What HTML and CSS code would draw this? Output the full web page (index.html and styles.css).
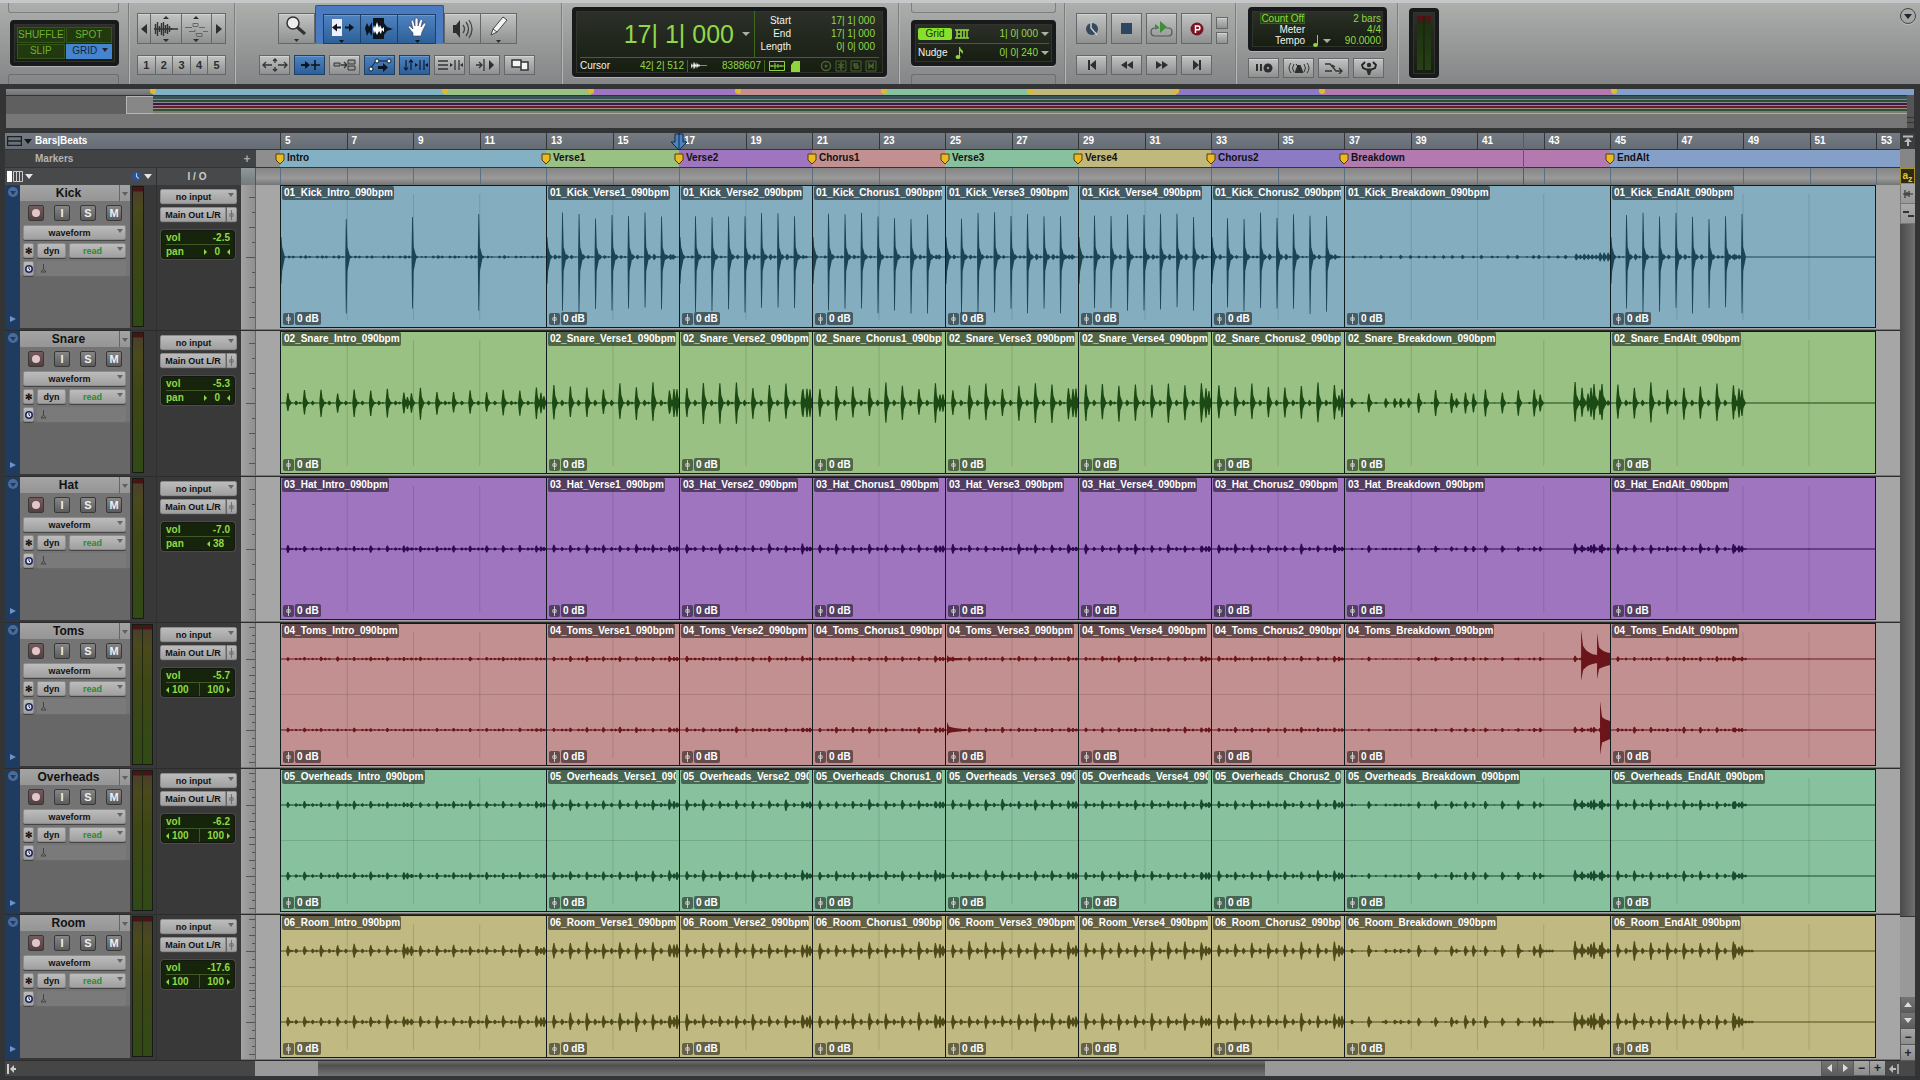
FILE: index.html
```html
<!DOCTYPE html>
<html lang="en">
<head>
<meta charset="utf-8">
<title>Edit window</title>
<link rel="stylesheet" href="styles.css">
</head>
<body>
<svg class="defs" aria-hidden="true">
  <symbol id="i-fader" viewBox="0 0 8 12"><path d="M4 0v12M2 4.500h4v3H2z" fill="none" stroke="currentColor"/></symbol>
  <symbol id="i-wave" viewBox="0 0 22 14"><path d="M0 7l1-4 1 4 1-6 1 5 1-5 1 5 1-4 1 4 1-3 1 3 1-2 1 2h10v.8H12l-1 2-1-2-1 3-1-3-1 4-1-4-1 5-1-5-1 5-1-6-1 5z" fill="currentColor"/></symbol>
  <symbol id="i-clock" viewBox="0 0 10 10"><circle cx="5" cy="5" r="4" fill="#dfe3f2" stroke="#22265c" stroke-width="2"/><path d="M5 2.500V5l1.500 1.500" fill="none" stroke="#15183c" stroke-width="1.200"/></symbol>
</svg>

<header class="toolbar">
  <section class="panel modes">
    <div class="lcd mode-grid">
      <button class="mode">SHUFFLE</button><button class="mode">SPOT</button>
      <button class="mode">SLIP</button><button class="mode on">GRID<i class="tri"></i></button>
    </div>
  </section>

  <section class="panel zooms">
    <div class="joined tall">
      <button class="tb narrow" aria-label="Zoom out"><svg width="6" height="10"><path d="M6 0v10L0 5z"/></svg></button>
      <button class="tb" aria-label="Audio zoom"><svg width="24" height="26" viewBox="0 0 24 26"><path d="M12 0l3 3H9zM12 26l3-3H9z"/><path d="M1.500 8v10M3.500 6v14M5.500 10v6M7.500 7v12M9.500 6v14M11.500 9v8M13.500 8v10M15.500 10v6M17.500 12v2M0 13h24" stroke="#333" stroke-width="1.400"/></svg></button>
      <button class="tb" aria-label="Midi zoom"><svg width="24" height="26" viewBox="0 0 24 26"><path d="M12 0l3 3H9zM12 26l3-3H9z"/><path d="M1 11.500h7M9 7.500h5v3H9zM15 11.500h6M5 15.500h6v-2M12 17.500h6v3h-5zM19 15.500h5" fill="none" stroke="#666"/></svg></button>
      <button class="tb narrow" aria-label="Zoom in"><svg width="6" height="10"><path d="M0 0v10l6-5z"/></svg></button>
    </div>
    <div class="joined short">
      <button class="tb">1</button><button class="tb">2</button><button class="tb">3</button><button class="tb">4</button><button class="tb">5</button>
    </div>
  </section>

  <section class="panel tools">
    <div class="joined tall tool-row">
      <button class="tb" aria-label="Zoomer"><svg width="24" height="28" viewBox="0 0 24 28"><circle cx="9" cy="8" r="6" fill="#eee" stroke="#333" stroke-width="1.500"/><path d="M13 12l8 7" stroke="#333" stroke-width="3"/><path d="M10 24h5l-2.500 3z"/></svg></button>
      <div class="smart">
        <button class="tb on" aria-label="Trim"><svg width="26" height="28" viewBox="0 0 26 28"><path d="M3 4h10v17H3z" fill="#eef"/><path d="M3 12.500l5-4v3h4v2H8v3zM25 12.500l-5-4v3h-4v2h4v3z"/><path d="M10 25h5l-2.500 3z"/></svg></button>
        <button class="tb on" aria-label="Selector"><svg width="28" height="26" viewBox="0 0 28 26"><path d="M0 12l2-5 2 4 3-5v14l-3-4-2 4zM19 7l3 4 6 2-6 2-3 4z"/><path d="M8 2h11v21H8z"/><path d="M8 13l1-4 1 3 2-6 2 6 1-3 2 4 2-2v5l-2-2-1 4-2-3-2 4-2-4-1 3z" fill="#fff"/></svg></button>
        <button class="tb on" aria-label="Grabber"><svg width="22" height="28" viewBox="0 0 22 28"><path d="M7 21v-3L2 12q1-2 3 0l2 2-2-8q1-2 2.500 0L9 11 9 4q1.500-2 3 0v7l2-6q2-1.500 2.500.500L15 12l3-4q2-.500 2 1l-4 8-1 4z" fill="#fff" stroke="#335" stroke-width=".6"/><path d="M9 25h5l-2.500 3z"/></svg></button>
      </div>
      <button class="tb" aria-label="Scrubber"><svg width="22" height="22" viewBox="0 0 22 22"><path d="M2 7h3l4-5v18l-4-5H2z"/><path d="M12 7q3 4 0 8M15 4q5 7 0 14M18 2q6 9 0 18" fill="none" stroke="#444" stroke-width="1.300"/></svg></button>
      <button class="tb" aria-label="Pencil"><svg width="20" height="28" viewBox="0 0 20 28"><path d="M2 20l2-6L14 2l4 3L8 17z" fill="#f4f4f4" stroke="#444"/><path d="M4 14l4 3" stroke="#444"/><path d="M7 25h5l-2.500 3z"/></svg></button>
    </div>
    <div class="spaced short">
      <button class="tb" aria-label="Zoom toggle"><svg width="26" height="14" viewBox="0 0 26 14"><path d="M1 7h9M16 7h9M4 4L1 7l3 3M22 4l3 3-3 3M13 1v4M13 9v4M11 3l2-2 2 2M11 11l2 2 2-2" fill="none" stroke="#333" stroke-width="1.300"/></svg></button>
      <button class="tb on" aria-label="Tab to transient"><svg width="22" height="14" viewBox="0 0 22 14"><path d="M2 6h4V3l5 4-5 4V8H2z"/><path d="M12 7h9M16 2v10" stroke="#111" stroke-width="1.500"/></svg></button>
      <button class="tb" aria-label="Mirrored editing"><svg width="24" height="14" viewBox="0 0 24 14"><path d="M1 5h6v3H1zM15 2h7v4h-7zM15 8h7v4h-7z" fill="#999" stroke="#333"/><path d="M8 7h5M11 4l3 3-3 3" fill="none" stroke="#333" stroke-width="1.300"/></svg></button>
      <button class="tb on" aria-label="Automation follows edit"><svg width="26" height="16" viewBox="0 0 26 16"><path d="M3 12l6-8h13" fill="none" stroke="#0c1a33"/><circle cx="4" cy="12" r="2" fill="#fff" stroke="#123"/><circle cx="10" cy="4" r="2" fill="#fff" stroke="#123"/><circle cx="22" cy="4" r="2" fill="#fff" stroke="#123"/><path d="M11 9h5V6l5 4.500-5 4.500v-3h-5z"/></svg></button>
      <button class="tb on" aria-label="Link timeline"><svg width="26" height="14" viewBox="0 0 26 14"><path d="M4 2v10M2 9.500L4 12l2-2.500M9 12V2M7 4.500L9 2l2 2.500M18 2v10M22 2v10" fill="none" stroke="#0c1a33" stroke-width="1.200"/><path d="M13 5l3 2-3 2zM26 5l-3 2 3 2z"/></svg></button>
      <button class="tb" aria-label="Link track"><svg width="26" height="14" viewBox="0 0 26 14"><path d="M1 3h10M1 7h10M1 11h10M18 2v10M22 2v10" stroke="#333" stroke-width="1.300"/><path d="M13 5l3 2-3 2zM26 5l-3 2 3 2z"/></svg></button>
      <button class="tb" aria-label="Insertion follows playback"><svg width="22" height="14" viewBox="0 0 22 14"><path d="M2 7h5M5 4l3 3-3 3M10 1v12" fill="none" stroke="#333" stroke-width="1.300"/><path d="M15 2l5 5-5 5z"/></svg></button>
      <button class="tb" aria-label="Layered editing"><svg width="20" height="14" viewBox="0 0 20 14"><path d="M2 2h9v7H2zM11 4h7v8h-7z" fill="#f4f4f4" stroke="#333" stroke-width="1.500"/></svg></button>
    </div>
  </section>

  <section class="panel counter-panel">
    <div class="lcd counter">
      <div class="main-count"><output>17| 1| 000</output><i class="tri light"></i></div>
      <dl class="selection">
        <dt>Start</dt><dd>17| 1| 000</dd>
        <dt>End</dt><dd>17| 1| 000</dd>
        <dt>Length</dt><dd>0| 0| 000</dd>
      </dl>
      <div class="cursor-row">
        <span class="white">Cursor</span><span class="cursor-pos">42| 2| 512</span>
        <svg class="white" width="16" height="12"><use href="#i-wave"/></svg><span class="sample">8388607</span>
        <svg width="32" height="12" viewBox="0 0 32 12"><path d="M.5 1.500h15v9H.5zM0 6h16M3 5v2M6 3v6M9 4v4M12 5v2" fill="none" stroke="#8ed63a"/><path d="M22 5l3-4h6v11h-9z" fill="#8ed63a"/></svg>
        <svg class="dim" width="60" height="14" viewBox="0 0 60 14"><circle cx="7" cy="7" r="4.500" fill="none" stroke="#4a6231" stroke-width="1.500"/><circle cx="7" cy="7" r="1.500" fill="#4a6231"/><path d="M17 2h10v10H17zM32 2h10v10H32zM47 2h10v10H47z" fill="none" stroke="#4a6231"/><path d="M22 3v8M19 5l6 4M25 5l-6 4M39 5h-4v2h4v2h-4M50 10V5l2 3 2-3v5" fill="none" stroke="#4a6231" stroke-width="1.500"/></svg>
      </div>
    </div>
  </section>

  <section class="panel grid-panel">
    <div class="lcd grid-box">
      <div class="grid-row"><button class="grid-btn">Grid</button><svg width="14" height="10" viewBox="0 0 14 10"><path d="M0 1h14M0 9h14M2 1v8M6 1v8M9 1v8M12 1v8M2 5h4" stroke="#8ed63a" stroke-width="1.500"/></svg><span>1| 0| 000</span><i class="tri light"></i></div>
      <div class="grid-row"><b class="white">Nudge</b><svg class="nudge-note" width="9" height="12" viewBox="0 0 9 12"><ellipse cx="3" cy="10" rx="2.500" ry="2"/><path d="M4 10V0h1q0 2 3 4 0 3-1 3 0-2-2-3v6z"/></svg><span>0| 0| 240</span><i class="tri light"></i></div>
    </div>
  </section>

  <section class="panel transport">
    <div class="spaced tall">
      <button class="tb" aria-label="Online"><svg width="16" height="16" viewBox="0 0 16 16"><circle cx="8" cy="8" r="6" fill="#34495e"/><path d="M7 1v6l6 7" fill="none" stroke="#ccc" stroke-width="1.500"/></svg></button>
      <button class="tb" aria-label="Stop"><svg width="12" height="12"><path d="M0 0h11v11H0z" fill="#2d4763"/></svg></button>
      <button class="tb" aria-label="Play"><svg width="24" height="18" viewBox="0 0 24 18"><path d="M9 8H5q-4 0-4 4t4 4h13q4 0 4-4t-4-4h-2" fill="none" stroke="#555" stroke-width="1.200"/><path d="M10 1l7 6-7 6zM5 4l4 3-4 3z" fill="#3d8d3a"/></svg></button>
      <button class="tb" aria-label="Record"><svg width="14" height="14" viewBox="0 0 14 14"><circle cx="7" cy="7" r="6.500" fill="#7d1322"/><path d="M5.500 11V4H8a1.800 1.800 0 010 3.800H5.500" fill="none" stroke="#fff" stroke-width="1.500"/></svg></button>
      <div class="minis"><button class="tb" aria-label="Input"></button><button class="tb" aria-label="Monitor"></button></div>
    </div>
    <div class="spaced short">
      <button class="tb" aria-label="Return to zero"><svg width="10" height="10"><path d="M1 0h2v10H1zM9 0v10L3 5z"/></svg></button>
      <button class="tb" aria-label="Rewind"><svg width="12" height="8"><path d="M6 0v8L0 4zM12 0v8L6 4z"/></svg></button>
      <button class="tb" aria-label="Fast forward"><svg width="12" height="8"><path d="M0 0v8l6-4zM6 0v8l6-4z"/></svg></button>
      <button class="tb" aria-label="Go to end"><svg width="10" height="10"><path d="M7 0h2v10H7zM1 0v10l6-5z"/></svg></button>
    </div>
  </section>

  <section class="panel tempo-panel">
    <dl class="lcd tempo">
      <dt><button class="count">Count Off</button></dt><dd>2 bars</dd>
      <dt>Meter</dt><dd>4/4</dd>
      <dt>Tempo</dt><dd><span class="note"><svg width="6" height="12" viewBox="0 0 6 12"><ellipse cx="2.500" cy="10" rx="2.500" ry="2"/><path d="M4 0h1v10H4z"/></svg><i class="tri light"></i></span>90.0000</dd>
    </dl>
    <div class="spaced short">
      <button class="tb" aria-label="Wait for note"><svg width="18" height="10" viewBox="0 0 18 10"><path d="M1 1h2v7H1zM5 1h2v7H5z"/><circle cx="13" cy="5" r="4.500"/><circle cx="13" cy="5" r="1.200" fill="#999"/></svg></button>
      <button class="tb" aria-label="Metronome"><svg width="24" height="12" viewBox="0 0 24 12"><path d="M4 1q-4 5 0 10M7 2q-3 4 0 8M20 1q4 5 0 10M17 2q3 4 0 8" fill="none" stroke="#333"/><path d="M10.500 3h3l3 8h-9z"/><path d="M9 2l5 6" stroke="#222"/></svg></button>
      <button class="tb" aria-label="Midi merge"><svg width="20" height="12" viewBox="0 0 20 12"><path d="M1 2h5l6 7h6M1 9h7M15 6l3 3-3 3M8 3l3 2" fill="none" stroke="#333" stroke-width="1.300"/></svg></button>
      <button class="tb" aria-label="Conductor"><svg width="18" height="14" viewBox="0 0 18 14"><circle cx="9" cy="4" r="2.200"/><path d="M5 1L2 4l1 3 4 1.500h4L15 7l1-3-3-3" fill="none" stroke="#222" stroke-width="1.800"/><path d="M6 8h6l-2 6H8z"/></svg></button>
    </div>
  </section>

  <section class="panel out-panel">
    <div class="lcd out-meter"><i></i></div>
    <button class="round" aria-label="Toolbar menu"><i class="tri"></i></button>
  </section>
</header>

<main class="edit">
  <div class="universe">
    <div class="u-markers" id="uMarkers"></div>
    <div class="u-view"><div class="u-left"><i></i></div><div class="u-bands"></div><div class="u-scroll"></div></div>
  </div>

  <div class="body">
    <div class="lanes">
      <div class="time-head">
        <div class="row ruler-row">
          <div class="row-label"><svg width="15" height="10"><path d="M.5.500h14v9H.5zM0 5h15" fill="none" stroke="#1d2023" stroke-width="1.500"/></svg><i class="tri dark"></i>Bars|Beats</div>
          <div class="bars" id="bars"></div>
        </div>
        <div class="row marker-row">
          <div class="row-label">Markers<button class="plus" aria-label="Add marker">+</button></div>
          <div class="marks" id="marks"></div>
        </div>
        <div class="row head-row">
          <div class="views"><svg width="16" height="11"><path d="M0 0h5v11H0z" fill="#fff"/><path d="M6.500.500h3v10h-3zM9.500.500h3v10h-3zM12.500.500h3v10h-3z" fill="none" stroke="#ccc"/></svg><i class="tri white-tri"></i><span class="grow"></span><svg width="11" height="11" viewBox="0 0 10 10"><circle cx="5" cy="5" r="4.500" fill="#2f5288"/><path d="M5 2v3l2 2" fill="none" stroke="#b9d0f0"/></svg><i class="tri white-tri"></i></div>
          <div class="io-title">I / O</div>
          <div class="scale-head"></div>
          <div class="bars blank" id="headBars"></div>
        </div>
        <div class="overlay"><i class="playhead"></i><svg class="insert" width="18" height="18" viewBox="0 0 18 18"><path d="M5 1h8v8h4l-8 8-8-8h4z" fill="#4a83c4" stroke="#14283f"/><path d="M9 0v17" stroke="#14283f"/></svg></div>
      </div>
      <div id="tracks"></div>
    </div>
    <div class="vscroll">
      <div class="v-top"><svg width="12" height="12"><path d="M1 1.500h10M6 11V6" stroke="#bbb" stroke-width="2"/><path d="M6 3l4 4H2z" fill="#bbb"/></svg></div>
      <div class="v-mark"></div>
      <button class="v-az" aria-label="Keyboard focus">a<sub>z</sub></button>
      <button class="sb tallbtn" aria-label="Audio zoom"><svg width="12" height="10"><path d="M1 5h10M3 1v8M7 2v6M5 3v4" stroke="#333" stroke-width="1.200"/></svg></button>
      <button class="sb tallbtn" aria-label="Midi zoom"><svg width="12" height="8"><path d="M1 2h6M6 6h6" stroke="#333" stroke-width="2"/></svg></button>
      <div class="v-thumb"></div><div class="v-free"></div>
      <button class="sb dk" aria-label="Scroll up"><svg width="8" height="5"><path d="M0 5h8L4 0z" fill="#ddd"/></svg></button>
      <button class="sb dk" aria-label="Scroll down"><svg width="8" height="5"><path d="M0 0h8L4 5z" fill="#ddd"/></svg></button>
      <button class="sb" aria-label="Shrink tracks">−</button>
      <button class="sb" aria-label="Grow tracks">+</button>
    </div>
  </div>

  <div class="hscroll">
    <div class="h-label"><svg width="10" height="10"><path d="M1 0v10" stroke="#ccc" stroke-width="2"/><path d="M3 5l4-4v3h2v2H7v3z" fill="#ccc"/></svg></div>
    <div class="h-track"><div class="h-thumb"></div></div>
    <button class="sb dk" aria-label="Scroll left"><svg width="5" height="8"><path d="M5 0v8L0 4z" fill="#ddd"/></svg></button>
    <button class="sb dk" aria-label="Scroll right"><svg width="5" height="8"><path d="M0 0v8l5-4z" fill="#ddd"/></svg></button>
    <button class="sb" aria-label="Zoom out">−</button>
    <button class="sb" aria-label="Zoom in">+</button>
    <div class="h-end"><svg width="10" height="10"><path d="M9 0v10" stroke="#bbb" stroke-width="1.500"/><path d="M0 5l4-4v3h3v2H4v3z" fill="#bbb"/></svg></div>
  </div>
</main>
<script src="app.js"></script>
</body>
</html>
```

FILE: styles.css
```css
* { box-sizing: border-box; }
html { background: #333436; }
body { margin: 0; min-width: 1500px; font: 10px/12px "Liberation Sans", Arial, sans-serif; color: #111; }
button, select { font: inherit; color: inherit; margin: 0; padding: 0; border: 0; border-radius: 0; background: none; }
svg { display: block; flex: none; }
dl, dd { margin: 0; }
.defs { display: none; }
.tri { display: inline-block; flex: none; width: 0; height: 0; border: 3px solid transparent; border-top: 4px solid #223; border-bottom: 0; }
.tri.light { border-top-color: #aab0a4; border-width: 4px 4px 0; }
.tri.dark { border-top-color: #15181b; border-width: 5px 4px 0; }
.tri.white-tri { border-top-color: #e4e4e4; border-width: 5px 4px 0; }
.white { color: #f2f4ee; }
.grow { flex: 1; }

/* toolbar */
.toolbar { display: flex; height: 84px; background: linear-gradient(#acaeac, #848687); border-top: 3px solid #c5c7c8; }
.panel { border-left: 1px solid #7d7f80; box-shadow: inset 1px 0 #b4b6b6; display: flex; flex-direction: column; flex: none; }
.panel:first-child { border-left: 0; box-shadow: none; }
.tb { display: flex; align-items: center; justify-content: center; background: linear-gradient(#c2c4c4, #8f9191); border: 1px solid #65686a; box-shadow: inset 0 1px #d2d4d4; font: bold 11px/14px "Liberation Sans", Arial, sans-serif; color: #2c2e30; }
.tb svg { fill: #2c2e30; }
.tb.on { background: linear-gradient(#4f83c0, #2d6098); border-color: #1d4068; box-shadow: inset 0 1px #6a9ad2; }
.tb.on svg { fill: #0e141c; }
.tall { height: 31px; }
.short { height: 20px; }
.joined { display: flex; }
.joined .tb { flex: 1; height: 100%; }
.joined .tb + .tb { border-left: 0; }
.spaced { display: flex; gap: 4px; }
.spaced .tb { width: 31px; height: 100%; }
.lcd { background: linear-gradient(#2c3029, #161d10); border: 4px solid #17191a; border-radius: 4px; box-shadow: inset 0 0 0 1px #30342c, 0 1px #b0b2b2; color: #8fd848; }

/* empty cluster slots show as outlines above and below the short displays */
.modes, .grid-panel { position: relative; }
.modes::before, .modes::after, .grid-panel::before, .grid-panel::after { content: ""; height: 9px; border: 1px solid #7c7e7f; border-radius: 0 0 3px 3px; border-top: 0; flex: none; }
.modes::after, .grid-panel::after { border: 1px solid #6c6e70; border-bottom: 0; border-radius: 3px 3px 0 0; margin-top: 8px; }
.modes, .grid-panel { gap: 0; }
.modes { width: 128px; padding: 0 9px 0 8px; }
.modes .lcd, .grid-panel .lcd { margin-top: 7px; flex: none; }
.modes .lcd { margin-left: 2px; }

.mode-grid { display: grid; grid-template-columns: 1fr 1fr; gap: 1px; height: 46px; padding: 3px; }
.mode { background: #22380f; border: 1px solid #35561a; color: #6db32f; position: relative; }
.mode.on { background: #4784cf; color: #0e2644; border-color: #4784cf; padding-right: 8px; }
.mode.on .tri { position: absolute; right: 3px; top: 3px; }

.zooms { width: 106px; padding: 10px 8px 0; gap: 11px; }
.joined .tb.narrow { flex: 0 0 14px; }
.tools { width: 327px; padding: 10px 25px 0 24px; gap: 11px; }
.tool-row { width: 240px; align-self: center; }
.smart { display: flex; flex: 0 0 129px; height: 39px; margin-top: -8px; padding: 8px 7px 0; background: #4a7ac0; border: 1px solid #2d558f; border-bottom: 0; border-radius: 2px; }

.counter-panel { width: 337px; padding: 4px 11px 0 10px; }
.counter { display: grid; grid-template-columns: 175px 1fr; grid-template-rows: 46px 1fr; height: 70px; padding: 0 4px; }
.main-count { display: flex; align-items: center; justify-content: flex-end; gap: 8px; padding-right: 4px; border-right: 1px solid #3c6a18; font-size: 25px; line-height: 28px; }
.selection { display: grid; grid-template-columns: 36px 1fr; align-content: center; text-align: right; line-height: 13px; padding: 0 4px 2px 0; }
.selection dt, .tempo dt { color: #f2f4ee; }
.cursor-row { grid-column: 1 / -1; display: flex; align-items: center; border-top: 1px solid #3c6a18; }
.cursor-pos { margin-left: auto; padding-right: 3px; border-right: 1px solid #3c6a18; margin-right: 3px; }
.sample { width: 58px; text-align: right; padding-right: 3px; margin-right: 4px; border-right: 1px solid #3c6a18; }
.cursor-row .dim { margin-left: 18px; }

.grid-panel { width: 166px; padding: 0 8px 0 12px; }
.grid-box { height: 46px; padding: 1px 3px; display: grid; grid-template-rows: 1fr 1fr; }
.grid-row { display: flex; align-items: center; gap: 3px; }
.grid-row + .grid-row { border-top: 1px solid #3c6a18; }
.grid-row svg { fill: #8ed63a; }
.nudge-note { margin-left: 5px; }
.grid-row span { margin-left: auto; }
.grid-row b { font-weight: normal; }
.grid-btn { width: 34px; height: 12px; line-height: 12px; background: #86e02c; color: #1c330a; border-radius: 2px; }

.transport { width: 171px; padding: 10px 4px 0 11px; gap: 11px; }
.minis { display: grid; gap: 3px; padding-top: 4px; }
.spaced .minis .tb { width: 12px; height: 12px; }
.tempo-panel { width: 162px; padding: 4px 10px 0 12px; gap: 7px; }
.tempo { display: grid; grid-template-columns: 51px 1fr; height: 44px; align-content: center; line-height: 11px; text-align: right; padding: 2px 2px 0; }
.count { background: #24400f; border: 1px solid #38601a; height: 11px; line-height: 9px; color: #8fd848; }
.tempo dd { display: flex; justify-content: flex-end; }
.note { display: flex; align-items: center; gap: 4px; margin-right: auto; padding-left: 8px; fill: #8ed63a; }
.out-panel { flex: 1; flex-direction: row; padding: 5px 4px 0 11px; justify-content: space-between; }
.out-meter { width: 30px; height: 70px; padding: 4px; }
.out-meter i { display: block; height: 100%; background: linear-gradient(90deg, transparent 45%, #1a280f 45% 55%, transparent 55%), linear-gradient(#541216 6px, #1d3012 6px, #274016); }
.round { width: 16px; height: 16px; border: 1px solid #44474a; border-radius: 50%; display: grid; place-items: center; box-shadow: 0 1px #bbb; }
.round .tri { border-width: 5px 4px 0; }

/* session overview */
.edit { padding: 5px; }
.universe { height: 39px; margin: 0 1px; }
.u-markers { display: grid; grid-template-columns: 147px 80fr repeat(6, 40fr) 80fr 82fr; height: 6px; background: linear-gradient(#8a8a8a, #707070); }
.u-mark { position: relative; }
.u-mark::before { content: ""; position: absolute; left: -3px; top: 0; width: 6px; height: 5px; background: #e0b92c; border-radius: 0 0 3px 3px; }
.u-view { display: grid; grid-template-columns: 147px 1fr 7px; height: 33px; background: #777; }
.u-left { height: 19px; background: #5f5f5f; border-top: 1px solid #333; display: flex; justify-content: flex-end; }
.u-left i { width: 27px; background: #878787; border: 1px solid #b4b4b4; border-right: 0; }
.u-bands { height: 19px; background: linear-gradient(#333 1px, #3a525c 1px 4px, #6f9372 4px 5px, #2e4e30 5px 7px, #8a8a90 7px 8px, #321c50 8px 10px, #a57a98 10px 11px, #6a1c28 11px 13px, #9b8d80 13px 14px, #2d5038 14px 16px, #7b7e6a 16px 18px, #acaca2 18px); }
.u-scroll { background: linear-gradient(#555 22px, #333 22px 23px, #555 23px 27px, #333 27px 28px, #555 28px); }

/* edit area */
.body { display: flex; margin-top: 5px; }
.lanes { flex: 1; min-width: 0; }
.time-head { position: relative; }
.row { display: flex; }
.row-label { flex: 0 0 251px; display: flex; align-items: center; font-weight: bold; }
.ruler-row { height: 16px; background: linear-gradient(#747b83, #666c73); color: #fff; margin-bottom: 1px; }
.ruler-row .row-label { gap: 2px; padding-left: 2px; }
.ruler-row .row-label .tri { margin-right: 1px; }
.bars { flex: 1; display: grid; grid-template-columns: repeat(24, 1fr) 24px; padding-left: 24px; }
.bars span { border-left: 1px solid #33373b; padding-left: 4px; font-weight: bold; line-height: 16px; }
.marker-row { height: 17px; background: #414243; color: #b4b4b4; margin-bottom: 1px; }
.marker-row .row-label { padding-left: 30px; }
.plus { margin-left: auto; width: 18px; font: bold 12px/14px "Liberation Sans", Arial, sans-serif; color: #aaa; }
.marks { flex: 1; display: grid; grid-template-columns: 8fr repeat(6, 4fr) 8fr 8fr 24px; padding-left: 24px; background: #8e8e8e; color: #111; }
.mark { position: relative; padding-left: 7px; font-weight: bold; line-height: 16px; white-space: nowrap; }
.mark svg { position: absolute; left: -5px; top: 3px; z-index: 1; }
.mark:last-child { grid-column: span 2; }
.head-row { height: 17px; background: #47494a; }
.views { flex: 0 0 151px; display: flex; align-items: center; gap: 2px; padding: 0 4px 0 2px; }
.io-title { flex: 0 0 85px; border-left: 1px solid #2f3031; font-weight: bold; color: #ccc; text-align: center; line-height: 18px; padding-right: 4px; }
.scale-head { flex: 0 0 15px; background: linear-gradient(#8f9799, #737b7d); border-right: 1px solid #555; }
.blank { background: linear-gradient(#858585, #9a9a9a 60%, #747474); }
.blank span { border-left-color: #5c7080; }
.overlay { position: absolute; inset: 0 24px 0 275px; pointer-events: none; }
.playhead { position: absolute; left: 77.9%; top: 0; bottom: 0; width: 1px; background: #c0284f; }
.insert { position: absolute; left: 25%; top: 0; margin-left: -9px; }

.track { display: flex; height: 146px; background: #383838; border-bottom: 1px solid #2c2c2c; }
.stripe { flex: 0 0 13px; margin-left: 1px; background: #1f3b5f; display: flex; flex-direction: column; justify-content: space-between; align-items: center; padding: 2px 0 8px; }
.strip { flex: 0 0 110px; margin: 0 0 2px 1px; background: linear-gradient(#747474 90px, #676767 92px); }
.name-bar { display: flex; height: 16px; background: linear-gradient(#a4a4a4, #959595); }
.name { flex: 1; font: bold 12px/16px "Liberation Sans", Arial, sans-serif; padding-right: 2px; }
.name-menu { width: 11px; border-left: 1px solid #666; }
.tri.mid { border-top-color: #606060; }
.rsm { display: flex; justify-content: space-between; padding: 4px 8px; }
.rsm button { width: 16px; height: 16px; border: 1px solid #383838; border-radius: 2px; background: linear-gradient(#868686, #5c5c5c); color: #eee; font: bold 11px/14px "Liberation Sans", Arial, sans-serif; display: grid; place-items: center; }
.rsm .rec { background: linear-gradient(#745c5e, #553e40); }
.rec::after { content: ""; width: 8px; height: 8px; border-radius: 50%; background: #e0c8ca; }
.ctl { display: flex; gap: 3px; margin: 0 4px 3px 3px; height: 15px; }
.btn, .pick select { height: 15px; font: bold 9px/14px "Liberation Sans", Arial, sans-serif; background: linear-gradient(#bcbcbc, #a0a0a0); border: 1px solid #8c8c8c; border-radius: 2px; box-shadow: 0 1px #444; }
.pick { position: relative; flex: 1; display: flex; min-width: 0; }
.pick select { appearance: none; width: 100%; text-align: center; text-align-last: center; padding: 0 10px 0 0; }
.pick::after { content: ""; position: absolute; right: 3px; top: 4px; border: 3px solid transparent; border-top: 4px solid #666; border-bottom: 0; pointer-events: none; }
.pick.green select { color: #2b8a2b; }
.mini { width: 11px; flex: none; display: grid; place-items: center; }
.dyn { width: 29px; flex: none; }
.slot { flex: 1; background: #7a7a7a; border-radius: 2px; color: #444; padding: 3px 0 0 3px; }
.meter-box { flex: 0 0 25px; padding: 0 0 2px 2px; }
.meter { display: block; height: 141px; width: 12px; border: 1px solid #181a14; background: linear-gradient(#4a1417 4px, #4a3f2c 5px, #4a4a1c 22px, #3e4614 60px, #304a16); margin-top: 1px; }
.meter.stereo { width: 21px; display: flex; justify-content: center; }
.meter.stereo::after { content: ""; width: 1px; background: #20280e; }
.io { flex: 0 0 85px; border-left: 1px solid #2f3031; padding: 4px 4px 0 3px; background: #393939; margin-left: 1px; }
.io .pick { margin-bottom: 3px; height: 15px; }
.out { display: flex; }
.out .btn { flex: 1; border-radius: 2px 0 0 2px; white-space: nowrap; }
.out .btn + .btn { flex: 0 0 11px; display: grid; place-items: center; color: #666; border-left-color: #666; border-radius: 0 2px 2px 0; }
.volpan { margin: 8px 2px 0 1px; height: 29px; padding: 0 4px; background: #17240c; border: 1px solid #14180e; border-radius: 3px; box-shadow: 0 0 0 1px #4a4d46; color: #8eda45; font-weight: bold; line-height: 13px; }
.volpan div { display: flex; justify-content: space-between; align-items: center; }
.volpan div + div { border-top: 1px solid #3f5a28; }
.volpan span { display: flex; align-items: center; gap: 3px; }
.volpan .gap7 { gap: 7px; }
.volpan .pan-one { padding-right: 6px; }
.volpan .half { border-left: 1px solid #3f5a28; padding-left: 7px; }
.l, .r { width: 0; height: 0; border: 3px solid transparent; }
.l { border-right-color: #8eda45; border-left: 0; }
.r { border-left-color: #8eda45; border-right: 0; }
.scale { flex: 0 0 15px; background: linear-gradient(90deg, #a3a3a3, #8f8f8f); border-right: 1px solid #666; color: #555; border-bottom: 1px solid #777; }
.lane { flex: 1; min-width: 0; display: grid; grid-template-columns: 8fr repeat(6, 4fr) 8fr 8fr; padding: 0 24px 2px; background: linear-gradient(#a6a6a6 144px, #777 144px); }
.clip { position: relative; min-width: 0; overflow: hidden; background: var(--fill); color: var(--wave); border: solid #111a1c; border-width: 1px 0 1px 1px; }
.clip:last-child { border-right-width: 1px; }
.clip > svg { position: absolute; left: 0; top: 0; width: 100%; height: 141px; }
.clip-name, .gain span, .gain i { position: relative; background: rgb(0 0 0 / .48); color: #fff; border-radius: 2px; font-weight: bold; }
.clip-name { display: block; width: fit-content; max-width: calc(100% - 4px); overflow: hidden; white-space: nowrap; line-height: 14px; margin-left: 1px; padding: 0 1px 0 2px; }
.gain { position: absolute; left: 2px; bottom: 2px; display: flex; gap: 1px; align-items: flex-end; }
.gain span { padding: 0 2px; line-height: 13px; }
.gain i { padding: 0 1px; height: 12px; width: 11px; display: grid; place-items: center; color: #ddd; }

/* scroll bars */
.sb { display: grid; place-items: center; background: linear-gradient(#a6a6a6, #8c8c8c); border: 1px solid #5a5a5a; border-width: 0 0 1px 1px; font: bold 12px/12px "Liberation Sans", Arial, sans-serif; color: #222; }
.sb.dk { background: linear-gradient(#757575, #5c5c5c); }
.vscroll { flex: 0 0 15px; display: flex; flex-direction: column; }
.v-top { height: 16px; display: grid; place-items: center; background: #3c3d3e; }
.v-mark { height: 19px; background: #868686; }
.v-az { height: 16px; background: #2c2a14; border: 1px solid #a8901e; color: #e8c62c; font: bold 10px/10px "Liberation Sans", Arial, sans-serif; }
.v-az sub { font-size: 9px; line-height: 6px; }
.vscroll .sb { height: 16px; }
.vscroll .tallbtn { height: 20px; background: linear-gradient(#aaa, #999); border-color: #777; }
.v-thumb { flex: 693; background: linear-gradient(90deg, #4a4a4a, #707070); border-bottom: 1px solid #333; }
.v-free { flex: 80; background: #999; }
.hscroll { display: flex; height: 15px; }
.h-label { flex: 0 0 250px; background: #464646; display: flex; align-items: center; padding-left: 2px; }
.h-track { flex: 1; background: #999; padding-left: 63px; }
.h-thumb { width: 63%; height: 100%; background: linear-gradient(#6e6e6e, #505050 30%, #747474); }
.hscroll .sb { width: 16px; }
.h-end { width: 30px; background: #484848; display: flex; align-items: center; padding-left: 4px; }
```

FILE: app.js
```js
const sections = [
  ['Intro', 8, '#84b0c4'], ['Verse1', 4, '#99c184'], ['Verse2', 4, '#9e75be'],
  ['Chorus1', 4, '#c29090'], ['Verse3', 4, '#88c19e'], ['Verse4', 4, '#c0b87c'],
  ['Chorus2', 4, '#8c7ac2'], ['Breakdown', 8, '#b37ab0'], ['EndAlt', 8, '#84a0c8']
];
const tracks = [
  { name: 'Kick', fill: '#84aec0', wave: '#1c4456', vol: '-2.5', pan: '0', hit: 0 },
  { name: 'Snare', fill: '#99c184', wave: '#1c4a14', vol: '-5.3', pan: '0', hit: 19 },
  { name: 'Hat', fill: '#9e75be', wave: '#2e0a52', vol: '-7.0', pan: '38', hit: 5 },
  { name: 'Toms', fill: '#c29090', wave: '#6b141a', vol: '-5.7', stereo: true, hit: 3 },
  { name: 'Overheads', fill: '#88c19e', wave: '#1a4c30', vol: '-6.2', stereo: true, hit: 5.5 },
  { name: 'Room', fill: '#c0ba82', wave: '#4e4a1a', vol: '-17.6', stereo: true, hit: 9 }
];
const BAR = 33.25;
const BEAT = BAR / 2;

let seed = 7;
const rnd = (a, b) => {
  seed = (seed * 16807) % 2147483647;
  return a + (b - a) * seed / 2147483647;
};

// One transient: a sharp attack followed by a short tail.
function hit(cy, x, up, down = up, tail = 4) {
  const n = v => v.toFixed(1);
  return `M${n(x - 2)} ${cy}L${n(x - .6)} ${n(cy - up)}h1.1L${n(x + 1.4)} ${n(cy - up * .4)}L${n(x + tail)} ${cy}` +
    `L${n(x + 1.4)} ${n(cy + down * .4)}L${n(x + .5)} ${n(cy + down)}h-1.1z`;
}
function spike(cy, x, up, down) {
  const n = v => v.toFixed(1);
  return `M${n(x - 1)} ${cy}L${n(x - .4)} ${n(cy - up)}h.8L${n(x + 1.2)} ${n(cy - 10)}L${n(x + 4)} ${cy}` +
    `L${n(x + 1.2)} ${n(cy + 14)}L${n(x + .4)} ${n(cy + down)}h-.8z`;
}
const blob = (cy, x, a) => `M${(x - 2).toFixed(1)} ${cy}l2 ${-a.toFixed(1)} 3 ${a.toFixed(1)}-3 ${a.toFixed(1)}z`;
const boom = (cy, x, up, down, w, end) =>
  `M${x} ${cy - up}l2 ${up * .55}Q${x + w * .4} ${cy - end * 1.2} ${x + w} ${cy - end}V${cy + end}Q${x + w * .4} ${cy + end * 1.3} ${x + 2} ${cy + down * .5}L${x} ${cy + down}z`;

function kickWave(section, width) {
  const cy = 71;
  let d = '';
  if (section === 'Breakdown') {
    for (let x = 8; x < 228; x += rnd(5, 11)) d += blob(cy, x, rnd(.8, 2.4));
    for (let x = 232; x < 266; x += 4) d += blob(cy, x, x > 254 ? 5 : rnd(2, 4));
    return d;
  }
  const step = section === 'Intro' ? BAR * 2 : BEAT;
  const end = section === 'EndAlt' ? 134 : width - 4;
  d += spike(cy, 0, 20, 27);
  for (let x = step; x < end; x += step) d += spike(cy, x - 1, rnd(38, 45), rnd(50, 57));
  for (let x = 0; x < end - 4; x += BEAT) {
    const a = section === 'Intro' ? 1.6 : 3;
    d += blob(cy, x + 3, a) + blob(cy, x + 8, rnd(1, a + .6)) + blob(cy, x + 12, rnd(.6, 1.8));
  }
  if (section !== 'Intro') for (let x = end - 14; x < end; x += 3) d += blob(cy, x, rnd(1, 3));
  return d;
}

function drumWave(t, section, width, cy, channel) {
  const h = t.hit;
  const tom = t.name === 'Toms';
  let d = '';
  if (section === 'Breakdown') {
    [7, 24, 41, 50, 56, 64, 74, 91, 107, 112, 121, 129, 141, 158, 174, 190, 196].forEach((x, i) => {
      d += hit(cy, x, [0, 2, 3, 4, 5, 9].includes(i) ? h * .25 : h * rnd(.45, .8));
    });
    for (let x = 10; x < 205; x += 7) d += blob(cy, x, rnd(.5, 1.3));
    if (t.name === 'Room') for (let x = 190; x < 210; x += 3) d += blob(cy, x, 1.4);
    [[231, 1.1], [238, .8], [244, .5], [247, .8], [250, 1], [256, .7], [258, 1]].forEach(([x, k]) => {
      d += hit(cy, x, h * k, h * k * .9, 5);
    });
    for (let x = 232; x < 266; x += 4) d += blob(cy, x, Math.min(3, h * .4));
    if (tom && channel === 0) d += boom(cy, 237, 29, 22, 16, 4) + boom(cy, 253, 26, 20, 13, 6);
    if (tom && channel === 1) d += boom(cy, 256, 29, 25, 10, 9);
    return d;
  }
  const quiet = section === 'Intro' ? .75 : 1;
  const end = section === 'EndAlt' ? 134 : width;
  for (let x = 7; x < end; x += BEAT) {
    const a = h * quiet * rnd(.65, 1.1);
    d += hit(cy, x, a, a * rnd(.8, 1.1));
    d += blob(cy, x + 8, Math.max(1.2, Math.min(3.5, h * .45) * quiet)) + blob(cy, x + 12, rnd(.6, 1.6)) + blob(cy, x + 4, rnd(.6, 1.4));
  }
  for (const back of [9, 5, 2]) d += hit(cy, end - back, h * quiet * rnd(.4, .8));
  if (section === 'Intro') for (const x of [127, 131]) d += hit(cy, x, h * rnd(.3, .6));
  if (section === 'EndAlt' && t.name === 'Room') for (let x = 130; x < 144; x += 3) d += blob(cy, x, 1.6);
  if (tom && section === 'Verse3') d += channel ? boom(cy, 1, 8, 6, 20, 1) : boom(cy, 1, 4, 4, 14, 1);
  return d;
}

function clip(t, i, [section, bars]) {
  const w = bars * BAR;
  const centres = t.stereo ? [35, 106] : [71];
  const d = centres.map((cy, c) =>
    (t.hit ? drumWave(t, section, w, cy, c) : kickWave(section, w)) + `M0 ${cy - .5}H${w}v1H0z`).join('');
  let grid = '';
  for (let b = 2; b < bars; b += 2) grid += `M${b * BAR} 8V134`;
  if (t.stereo) grid += `M0 70.5H${w}`;
  return `<div class="clip"><svg viewBox="0 0 ${w} 141" preserveAspectRatio="none"><path d="${grid}" stroke="#000" stroke-opacity=".13"/><path d="${d}" fill="currentColor"/></svg>
    <span class="clip-name">0${i + 1}_${t.name}_${section}_090bpm</span>
    <div class="gain"><i><svg width="7" height="10"><use href="#i-fader"/></svg></i><span>0 dB</span></div></div>`;
}

function scale(stereo) {
  let d = '';
  const marks = (cy, gap) => {
    for (let k = -4; k <= 4; k++) d += `M${k === 0 ? 5 : k % 2 ? 11 : 8} ${cy + k * gap + .5}H14`;
  };
  if (stereo) { marks(36, 8); marks(107, 8); } else marks(72, 15);
  return `<svg width="14" height="143"><path d="${d}" stroke="currentColor"/></svg>`;
}

function panView(t) {
  if (t.stereo) return '<div><span><i class="l"></i>100</span><span class="half">100<i class="r"></i></span></div>';
  if (t.pan === '0') return '<div>pan<span class="gap7"><i class="r"></i>0<i class="l"></i></span></div>';
  return `<div>pan<span class="pan-one"><i class="l"></i>${t.pan}</span></div>`;
}

const pick = (label, value, cls = '') =>
  `<label class="pick ${cls}"><select aria-label="${label}"><option>${value}</option></select></label>`;

document.getElementById('tracks').innerHTML = tracks.map((t, i) => `
<section class="track" style="--fill:${t.fill};--wave:${t.wave}">
  <div class="stripe"><svg width="10" height="10"><circle cx="5" cy="5" r="5" fill="#4b6c98"/><path d="M2 4h6L5 8z" fill="#1f3b5f"/></svg><svg width="6" height="6"><path d="M0 0l6 3-6 3z" fill="#6c94c8"/></svg></div>
  <div class="strip">
    <div class="name-bar"><button class="name">${t.name}</button><button class="name-menu" aria-label="Track menu"><i class="tri mid"></i></button></div>
    <div class="rsm"><button class="rec" aria-label="Record"></button><button>I</button><button>S</button><button>M</button></div>
    <div class="ctl">${pick('Track view', 'waveform')}</div>
    <div class="ctl"><button class="btn mini" aria-label="Freeze">✻</button><button class="btn dyn">dyn</button>${pick('Automation', 'read', 'green')}</div>
    <div class="ctl"><button class="btn mini" aria-label="Timebase"><svg width="8" height="8"><use href="#i-clock"/></svg></button><div class="slot"><svg width="7" height="9"><path d="M3.500 0v5M1 8l2.500-3L6 8z" fill="none" stroke="currentColor"/></svg></div></div>
  </div>
  <div class="meter-box"><i class="meter ${t.stereo ? 'stereo' : ''}"></i></div>
  <div class="io">
    ${pick('Input', 'no input')}
    <div class="out"><button class="btn">Main Out L/R</button><button class="btn" aria-label="Output fader"><svg width="7" height="10"><use href="#i-fader"/></svg></button></div>
    <div class="volpan"><div>vol<span>${t.vol}</span></div>${panView(t)}</div>
  </div>
  <div class="scale">${scale(t.stereo)}</div>
  <div class="lane">${sections.map(s => clip(t, i, s)).join('')}</div>
</section>`).join('');

const bars = Array.from({ length: 25 }, (_, k) => 5 + k * 2);
document.getElementById('bars').innerHTML = bars.map(b => `<span>${b}</span>`).join('');
document.getElementById('headBars').innerHTML = bars.map(() => '<span></span>').join('');
document.getElementById('marks').innerHTML = sections.map(([n, , c]) =>
  `<div class="mark" style="background:${c}"><svg width="10" height="12"><path d="M1 1h8v6l-4 4-4-4z" fill="#ecb920" stroke="#4c3d10"/></svg>${n}</div>`).join('');
document.getElementById('uMarkers').innerHTML = '<span></span>' + sections.map(([, , c]) =>
  `<span class="u-mark" style="background:${c}"></span>`).join('');
```
